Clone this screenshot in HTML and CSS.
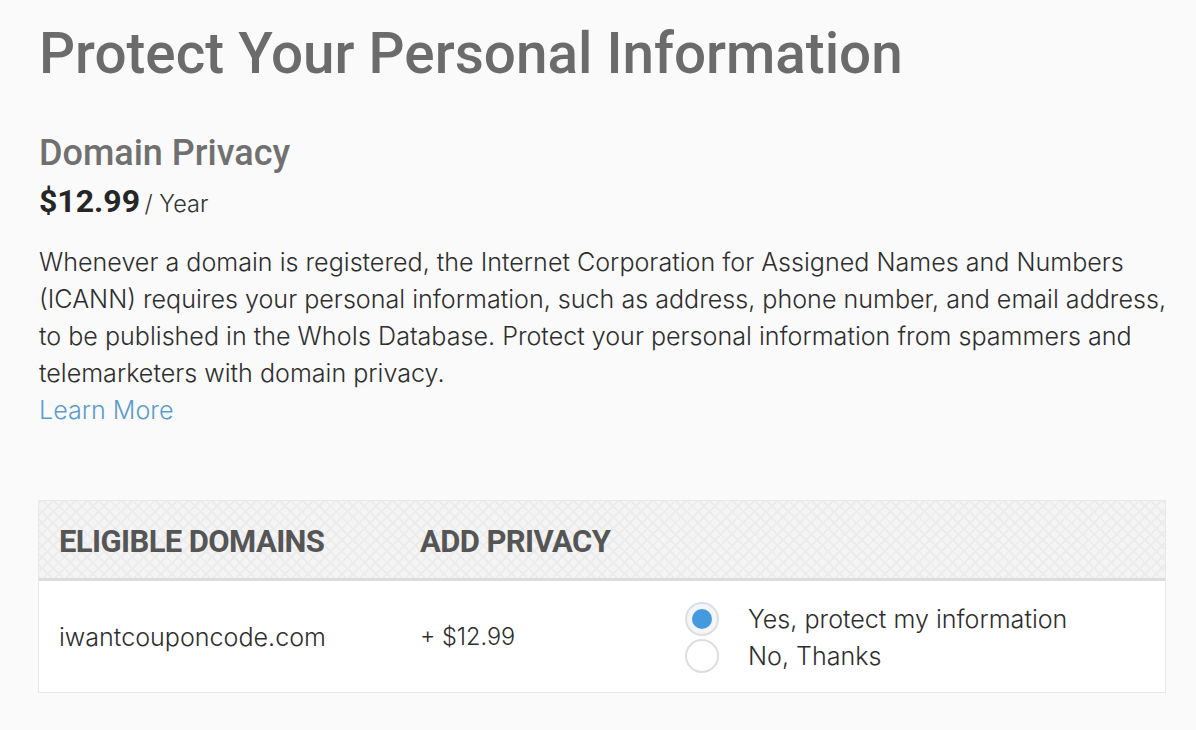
FILE: index.html
```html
<!DOCTYPE html>
<html>
<head>
<meta charset="utf-8">
<link rel="stylesheet" href="styles.css">
</head>
<body>
<div class="page">
  <h1 class="title">Protect Your Personal Information</h1>
  <h2 class="subtitle">Domain Privacy</h2>
  <div class="price"><span class="amount">$12.99</span> <span class="per">/ Year</span></div>
  <p class="desc">Whenever a domain is registered, the Internet Corporation for Assigned Names and Numbers (ICANN) requires your personal information, such as address, phone number, and email address, to be published in the WhoIs Database. Protect your personal information from spammers and telemarketers with domain privacy.<br><a class="learn" href="#">Learn More</a></p>
  <div class="table">
    <div class="thead">
      <div class="col col-domain">ELIGIBLE DOMAINS</div>
      <div class="col col-add">ADD PRIVACY</div>
    </div>
    <div class="row">
      <div class="col col-domain">iwantcouponcode.com</div>
      <div class="col col-add">+ $12.99</div>
      <div class="col col-opts">
        <label class="opt"><span class="radio checked"></span><span>Yes, protect my information</span></label>
        <label class="opt"><span class="radio"></span><span>No, Thanks</span></label>
      </div>
    </div>
  </div>
</div>
</body>
</html>
```
FILE: styles.css
```css
html, body { margin: 0; padding: 0; }
body {
  background: #fafafa;
  font-family: Inter, "Liberation Sans", sans-serif;
  color: #333;
  width: 1196px;
  height: 730px;
  overflow: hidden;
}
.page { padding: 18px 30px 0 39px; }
.title {
  margin: 0;
  font-family: Roboto, "Liberation Sans", sans-serif;
  font-size: 56.6px;
  font-weight: 500;
  color: #6b6b6b;
  line-height: 72px;
}
.subtitle {
  margin: 43px 0 0 0;
  font-family: Roboto, "Liberation Sans", sans-serif;
  font-size: 36px;
  font-weight: 500;
  color: #707070;
  line-height: 40px;
}
.price { margin-top: 8px; line-height: 40px; }
.amount { font-family: Roboto, "Liberation Sans", sans-serif; font-size: 32px; font-weight: 700; color: #262626; }
.per { font-size: 23.5px; color: #333; font-weight: 300; }
.desc {
  margin: 18px 0 0 0;
  font-size: 25.1px;
  font-weight: 300;
  line-height: 37px;
  color: #2e2e2e;
}
.learn { color: #5a9ccf; text-decoration: none; }
.table {
  margin: 71px 0 0 -1px;
  width: 1126px;
  border: 1px solid #e8e8e8;
  background: #fff;
}
.thead {
  display: flex;
  align-items: center;
  height: 80px;
  padding-top: 4px;
  box-sizing: border-box;
  border-bottom: 3px solid #dcdcdc;
  background-color: #f4f4f4;
  background-image:
    repeating-linear-gradient(45deg, #ececec 0 2px, transparent 2px 8px),
    repeating-linear-gradient(-45deg, #ececec 0 2px, transparent 2px 8px);
  font-family: Roboto, "Liberation Sans", sans-serif;
  font-weight: 700;
  font-size: 31px;
  letter-spacing: -0.6px;
  color: #555;
}
.col-domain { width: 381px; padding-left: 20px; box-sizing: border-box; }
.col-add { width: 265px; }
.row {
  display: flex;
  align-items: center;
  height: 111px;
  font-size: 25.1px;
  font-weight: 300;
  color: #2e2e2e;
}
.row .col-add { font-size: 23.5px; }
.col-opts { display: flex; flex-direction: column; gap: 3px; padding-top: 2px; }
.opt { display: flex; align-items: center; gap: 29px; line-height: 34px; }
.radio {
  width: 34px; height: 34px;
  box-sizing: border-box;
  border-radius: 50%;
  border: 2px solid #dedede;
  background: #fff;
  position: relative;
}
.radio.checked { background: #f2f6fa; }
.radio.checked::after {
  content: "";
  position: absolute;
  left: 5px; top: 5px;
  width: 20px; height: 20px;
  border-radius: 50%;
  background: #4599dd;
}
```
